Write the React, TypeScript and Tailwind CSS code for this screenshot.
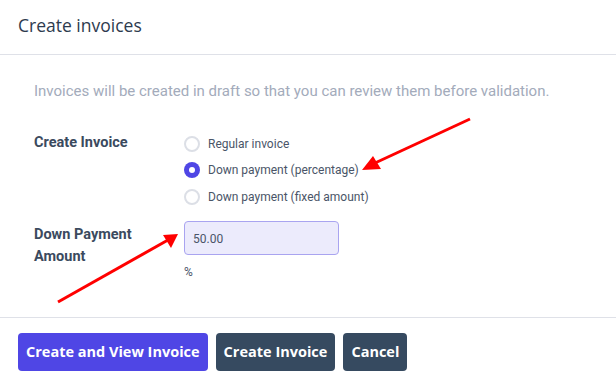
import React from "react";

const OPTIONS = [
  "Regular invoice",
  "Down payment (percentage)",
  "Down payment (fixed amount)",
];

function Radio({ checked, label }: { checked: boolean; label: string }) {
  return (
    <label className="flex h-[26.5px] items-center gap-2">
      {checked ? (
        <span className="flex h-4 w-4 items-center justify-center rounded-full bg-[#4f46e5]">
          <span className="h-1.5 w-1.5 rounded-full bg-white" />
        </span>
      ) : (
        <span className="h-4 w-4 rounded-full border-2 border-[#dcdfe6] bg-white" />
      )}
      <span className="text-[12px] text-[#4a5568]">{label}</span>
    </label>
  );
}

export default function App() {
  return (
    <div
      className="relative h-[386px] w-[616px] overflow-hidden bg-white"
      style={{ fontFamily: "Roboto, 'Liberation Sans', sans-serif" }}
    >
      <div className="flex h-[55px] items-center border-b border-[#dfe1e8] px-[18px] pb-[3px]">
        <h2
          className="text-[17.5px] text-[#2d3b4e]"
          style={{ fontFamily: "'Open Sans', 'Noto Sans', sans-serif" }}
        >
          Create invoices
        </h2>
      </div>

      <div className="h-[263px] border-b border-[#dfe1e8] px-[34px] pt-[25px]">
        <p className="text-[15px] text-[#a3abbb]">
          Invoices will be created in draft so that you can review them before
          validation.
        </p>

        <div className="mt-[28px] flex">
          <div className="w-[150px] pt-[1px] text-[14.5px] font-bold text-[#3b4a5e]">
            Create Invoice
          </div>
          <div className="flex flex-col">
            {OPTIONS.map((o, i) => (
              <Radio key={o} label={o} checked={i === 1} />
            ))}
          </div>
        </div>

        <div className="mt-[11px] flex">
          <div className="w-[150px] pt-[3px] text-[14.5px] font-bold leading-[22px] text-[#3b4a5e]">
            Down Payment
            <br />
            Amount
          </div>
          <div className="flex flex-col">
            <input
              readOnly
              value="50.00"
              className="h-[34px] w-[155px] rounded border border-[#a9a4f0] bg-[#ecebfc] px-[8px] pt-[2px] text-[12px] text-[#4a5568] outline-none"
            />
            <span className="mt-[8px] text-[12px] text-[#4a5568]">%</span>
          </div>
        </div>
      </div>

      <div
        className="flex gap-2 px-[18px] pt-[15px]"
        style={{ fontFamily: "'Open Sans', 'Noto Sans', sans-serif" }}
      >
        <button className="h-[38px] rounded bg-[#4f46e5] px-[8px] text-[14.5px] font-bold text-white">
          Create and View Invoice
        </button>
        <button className="h-[38px] rounded bg-[#364a60] px-[8px] text-[14.5px] font-bold text-white">
          Create Invoice
        </button>
        <button className="h-[38px] rounded bg-[#364a60] px-[8px] text-[14.5px] font-bold text-white">
          Cancel
        </button>
      </div>

      <svg
        className="pointer-events-none absolute left-0 top-0"
        width="616"
        height="386"
        viewBox="0 0 616 386"
      >
        <line x1="470" y1="119" x2="375" y2="163" stroke="#f00" strokeWidth="3" />
        <polygon points="362,170 373,156 381,169" fill="#f00" />
        <line x1="58" y1="302" x2="168" y2="240" stroke="#f00" strokeWidth="3" />
        <polygon points="178,234 163,235 171,248" fill="#f00" />
      </svg>
    </div>
  );
}
